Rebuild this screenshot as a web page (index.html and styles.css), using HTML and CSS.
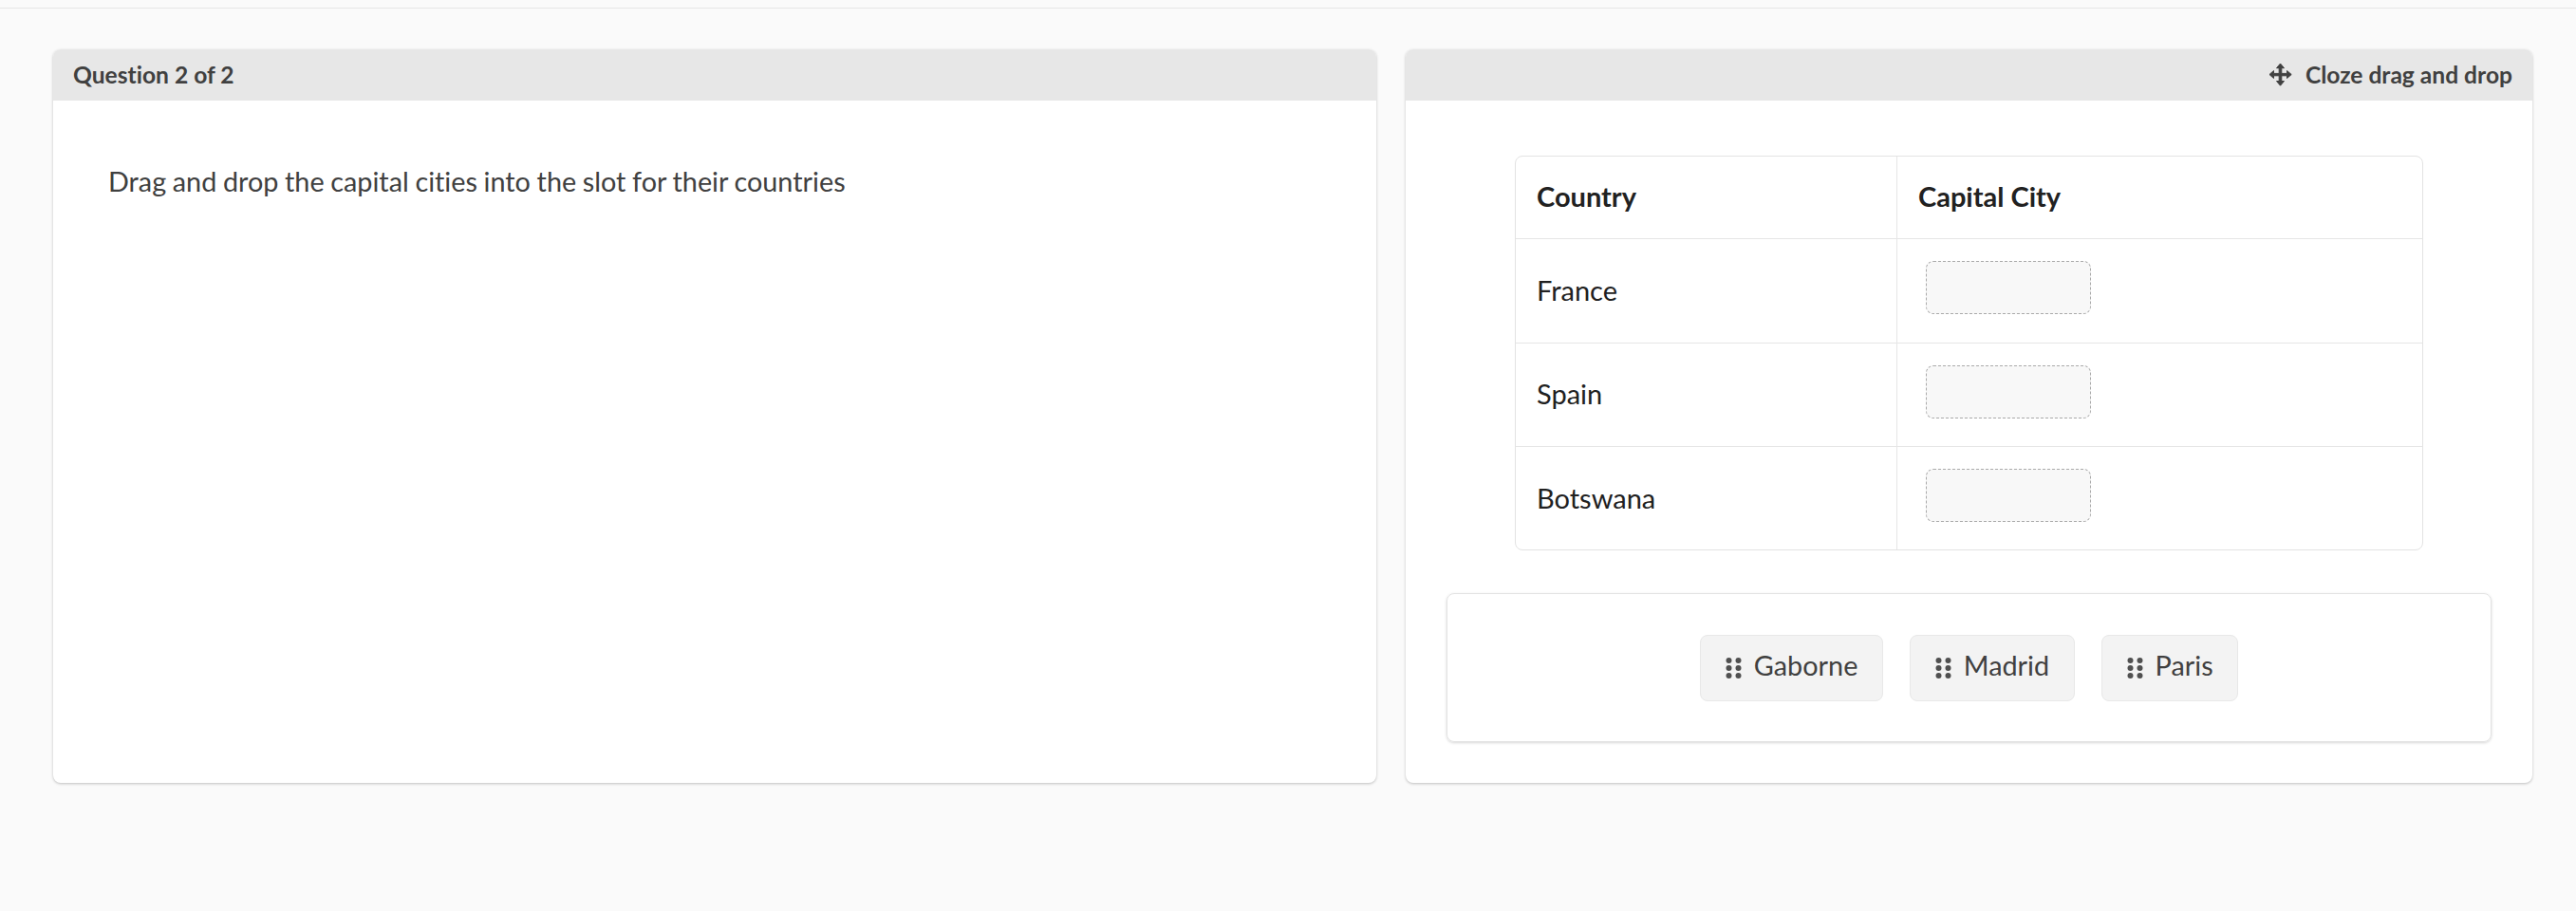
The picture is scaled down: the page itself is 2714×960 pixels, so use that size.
FILE: index.html
```html
<!DOCTYPE html>
<html lang="en">
<head>
<meta charset="utf-8">
<title>Question 2 of 2</title>
<link rel="stylesheet" href="styles.css">
</head>
<body>
<div class="topbar"></div>
<main class="layout">
  <section class="panel">
    <header class="panel-head"><span>Question 2 of 2</span></header>
    <div class="question"><p>Drag and drop the capital cities into the slot for their countries</p></div>
  </section>
  <section class="panel">
    <header class="panel-head panel-head-right">
      <svg class="move-icon" viewBox="0 0 25 25" aria-hidden="true"><path d="M12.500 1l4 4.700h-2.700v5.700h5.700V8.500l4.700 4-4.700 4v-2.700h-5.700v5.700h2.700l-4 4.700-4-4.700h2.700v-5.700H5.500v2.700L1 12.500l4.500-4v2.900h5.700V5.700H8.500z"/></svg>
      <span>Cloze drag and drop</span>
    </header>
    <div class="answer">
      <table class="cloze">
        <tr class="row-head"><th class="col-a">Country</th><th>Capital City</th></tr>
        <tr class="row-first"><td class="col-a">France</td><td><div class="slot"></div></td></tr>
        <tr class="row-mid"><td class="col-a">Spain</td><td><div class="slot"></div></td></tr>
        <tr class="row-last"><td class="col-a">Botswana</td><td><div class="slot"></div></td></tr>
      </table>
      <div class="bank">
        <div class="chip"><svg class="grip" viewBox="0 0 17 22" aria-hidden="true"><circle cx="3.500" cy="3" r="3"/><circle cx="13.500" cy="3" r="3"/><circle cx="3.500" cy="11" r="3"/><circle cx="13.500" cy="11" r="3"/><circle cx="3.500" cy="19" r="3"/><circle cx="13.500" cy="19" r="3"/></svg><span>Gaborne</span></div>
        <div class="chip"><svg class="grip" viewBox="0 0 17 22" aria-hidden="true"><circle cx="3.500" cy="3" r="3"/><circle cx="13.500" cy="3" r="3"/><circle cx="3.500" cy="11" r="3"/><circle cx="13.500" cy="11" r="3"/><circle cx="3.500" cy="19" r="3"/><circle cx="13.500" cy="19" r="3"/></svg><span>Madrid</span></div>
        <div class="chip"><svg class="grip" viewBox="0 0 17 22" aria-hidden="true"><circle cx="3.500" cy="3" r="3"/><circle cx="13.500" cy="3" r="3"/><circle cx="3.500" cy="11" r="3"/><circle cx="13.500" cy="11" r="3"/><circle cx="3.500" cy="19" r="3"/><circle cx="13.500" cy="19" r="3"/></svg><span>Paris</span></div>
      </div>
    </div>
  </section>
</main>
</body>
</html>
```
FILE: styles.css
```css
* { box-sizing: border-box; }
html, body { margin: 0; height: 100%; }
body {
  background: #fafafa;
  font-family: Lato, "Open Sans", sans-serif;
  font-variant-ligatures: none;
  color: #404040;
}
.topbar { height: 9px; border-bottom: 1px solid #e6e6e6; }
.layout {
  display: grid;
  grid-template-columns: 1394px 1187px;
  column-gap: 31px;
  padding: 43px 0 0 56px;
}
.panel {
  height: 773px;
  background: #fff;
  border-radius: 8px;
  box-shadow: 0 1px 3px rgba(0,0,0,.24);
}
.panel-head {
  display: flex;
  align-items: center;
  height: 54px;
  padding: 0 21px 2px;
  background: #e7e7e7;
  border-radius: 8px 8px 0 0;
  font-size: 24.6px;
  font-weight: 700;
}
.panel-head-right { justify-content: flex-end; }
.move-icon { width: 25px; height: 25px; margin-right: 14px; fill: #404040; stroke: #404040; stroke-linejoin: round; }
.question { padding: 63px 58px; }
.question p { margin: 0; font-size: 28.8px; line-height: 44px; word-spacing: -.75px; }
.answer { padding: 58px 43px 0; }
.cloze {
  width: 957px;
  margin: 0 0 0 72px;
  border-collapse: separate;
  border-spacing: 0;
  border: 1px solid #e3e3e3;
  border-radius: 8px;
  color: #212121;
  font-size: 29px;
}
.cloze th, .cloze td {
  text-align: left;
  padding: 0 22px;
  border-bottom: 1px solid #e6e6e6;
  height: 109px;
}
.cloze td { padding-bottom: 2px; }
.cloze th { height: 87px; padding-bottom: 3px; font-weight: 700; }
.cloze .col-a { width: 402px; border-right: 1px solid #e6e6e6; }
.cloze td + td { padding: 0 0 6px 30px; }
.cloze .row-first td + td { padding-bottom: 8px; }
.cloze .row-mid .col-a { padding-bottom: 4px; }
.cloze .row-first td { height: 110px; }
.cloze .row-last td { height: 108px; border-bottom: 0; }
.slot {
  width: 174px;
  height: 56px;
  background: #f8f8f8;
  border: 1px dashed #aaa;
  border-radius: 8px;
}
.bank {
  display: flex;
  justify-content: center;
  gap: 28px;
  margin-top: 45px;
  height: 157px;
  padding-top: 43px;
  width: 1101px;
  border: 1px solid #e3e3e3;
  border-radius: 8px;
  box-shadow: 0 1px 3px rgba(0,0,0,.16);
}
.chip {
  display: flex;
  align-items: center;
  gap: 13px;
  height: 70px;
  padding: 0 25.5px 6px 26px;
  background: #f3f3f3;
  border: 1px solid #e8e8e8;
  border-radius: 8px;
  font-size: 28.8px;
}
.grip { width: 17px; height: 22px; margin-top: 6px; fill: #505050; }
```
